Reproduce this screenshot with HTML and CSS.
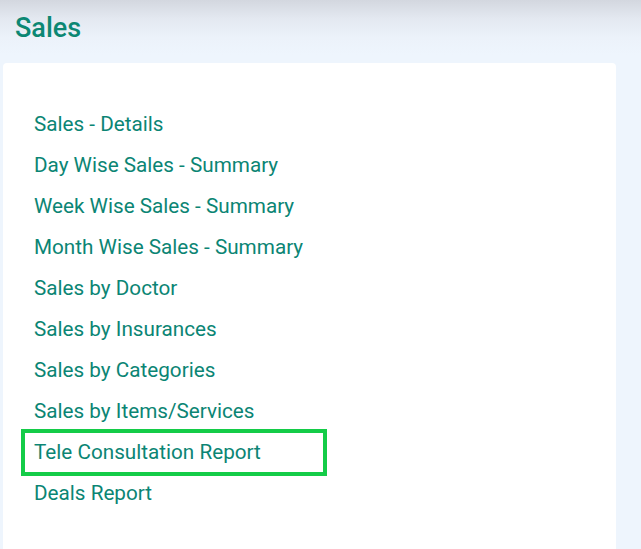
FILE: index.html
```html
<!DOCTYPE html>
<html lang="en">
<head>
<meta charset="utf-8">
<title>Sales</title>
<link rel="stylesheet" href="styles.css">
</head>
<body>
<div class="page">
  <header class="page-header">
    <h1 class="page-title">Sales</h1>
  </header>
  <section class="card">
    <ul class="report-list">
      <li><a class="report-link" href="#">Sales - Details</a></li>
      <li><a class="report-link" href="#">Day Wise Sales - Summary</a></li>
      <li><a class="report-link" href="#">Week Wise Sales - Summary</a></li>
      <li><a class="report-link" href="#">Month Wise Sales - Summary</a></li>
      <li><a class="report-link" href="#">Sales by Doctor</a></li>
      <li><a class="report-link" href="#">Sales by Insurances</a></li>
      <li><a class="report-link" href="#">Sales by Categories</a></li>
      <li><a class="report-link" href="#">Sales by Items/Services</a></li>
      <li><a class="report-link is-highlighted" href="#">Tele Consultation Report</a></li>
      <li><a class="report-link" href="#">Deals Report</a></li>
    </ul>
  </section>
</div>
</body>
</html>
```

FILE: styles.css
```css
html, body {
  margin: 0;
  padding: 0;
}

body {
  font-family: Roboto, "Liberation Sans", Arial, sans-serif;
  background: #eef5fd linear-gradient(180deg, #d3d7df 0px, #e3e8f0 18px, #ecf2fa 38px, #eef5fd 55px) no-repeat;
  background-size: 100% 60px;
  height: 549px;
  overflow: hidden;
}

.page {
  display: flex;
  flex-direction: column;
}

.page-header {
  height: 63px;
  box-sizing: border-box;
  padding: 15px 0 0 15px;
}

.page-title {
  margin: 0;
  font-size: 27px;
  line-height: 26px;
  font-weight: 500;
  color: #0c8773;
}

.card {
  margin-left: 3px;
  width: 613px;
  background: #ffffff;
  border-radius: 4px 4px 0 0;
  padding: 41px 0 40px 21px;
  box-sizing: border-box;
}

.report-list {
  list-style: none;
  margin: 0;
  padding: 0;
}

.report-link {
  display: block;
  width: 300px;
  box-sizing: border-box;
  padding-left: 10px;
  font-size: 20.7px;
  line-height: 41px;
  color: #0b8574;
  text-decoration: none;
}

.report-link.is-highlighted {
  outline: 4px solid #14cc48;
  outline-offset: -1.5px;
}
```
